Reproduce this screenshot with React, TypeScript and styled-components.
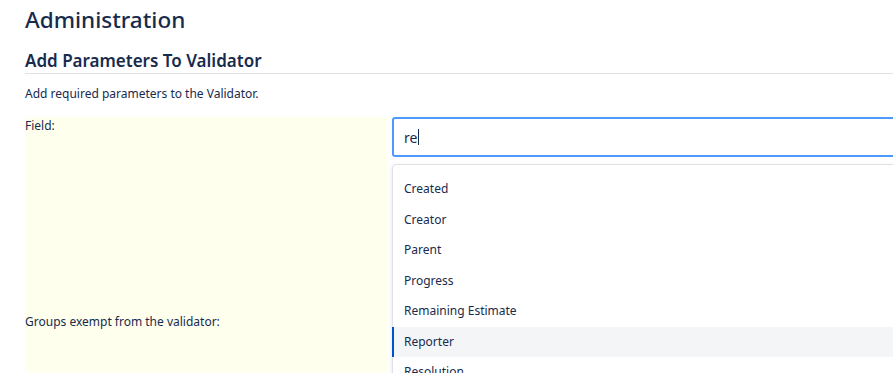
import React from "react";
import styled, { createGlobalStyle } from "styled-components";

const Global = createGlobalStyle`
  html, body { margin: 0; padding: 0; background: #fff; overflow: hidden; }
  body { font-family: "Noto Sans", "Open Sans", sans-serif; color: #172b4d; }
`;

const Page = styled.div`
  padding: 0 0 0 25px;
  width: 1100px;
`;

const Title = styled.h1`
  margin: 0;
  padding-top: 4px;
  font-size: 22.5px;
  font-weight: 500;
  line-height: 32px;
  color: #172b4d;
`;

const SectionTitle = styled.h2`
  margin: 13px 0 0;
  font-size: 17px;
  font-weight: 600;
  line-height: 24px;
  padding-bottom: 0;
  border-bottom: 1px solid #dfe1e6;
  color: #172b4d;
`;

const Description = styled.p`
  margin: 11px 0 0;
  font-size: 12px;
  line-height: 18px;
`;

const Form = styled.div`
  margin-top: 14px;
  display: grid;
  grid-template-columns: 362px 700px;
  grid-template-rows: 196px 80px;
  column-gap: 5px;
`;

const Label = styled.div`
  background: #ffffee;
  font-size: 12px;
  line-height: 18px;
`;

const Cell = styled.div`
  position: relative;
`;

const Input = styled.div`
  box-sizing: border-box;
  height: 40px;
  border: 2px solid #4c9aff;
  border-radius: 3px;
  padding: 0 10px;
  display: flex;
  align-items: center;
  font-size: 14px;
  color: #172b4d;
`;

const Caret = styled.span`
  display: inline-block;
  width: 1px;
  height: 16px;
  background: #172b4d;
  margin-left: 1px;
`;

const Menu = styled.ul`
  position: absolute;
  top: 47px;
  left: 0;
  width: 620px;
  margin: 0;
  padding: 9px 0 0;
  list-style: none;
  background: #fff;
  border: 1px solid #dfe1e6;
  border-radius: 4px;
  box-shadow: 0 2px 4px rgba(9, 30, 66, 0.12);
  z-index: 2;
`;

const Item = styled.li<{ $active?: boolean }>`
  padding: 6px 11px 6px 12px;
  margin-left: -1px;
  font-size: 12px;
  line-height: 18.5px;
  color: #172b4d;
  background: ${(p) => (p.$active ? "#f4f5f7" : "transparent")};
  box-shadow: ${(p) => (p.$active ? "inset 2px 0 0 #0052cc" : "none")};
`;

const items = [
  "Created",
  "Creator",
  "Parent",
  "Progress",
  "Remaining Estimate",
  "Reporter",
  "Resolution",
];

export default function App() {
  return (
    <>
      <Global />
      <Page>
        <Title>Administration</Title>
        <SectionTitle>Add Parameters To Validator</SectionTitle>
        <Description>Add required parameters to the Validator.</Description>
        <Form>
          <Label>Field:</Label>
          <Cell>
            <Input>
              re<Caret />
            </Input>
            <Menu>
              {items.map((t) => (
                <Item key={t} $active={t === "Reporter"}>
                  {t}
                </Item>
              ))}
            </Menu>
          </Cell>
          <Label>Groups exempt from the validator:</Label>
          <Cell />
        </Form>
      </Page>
    </>
  );
}
